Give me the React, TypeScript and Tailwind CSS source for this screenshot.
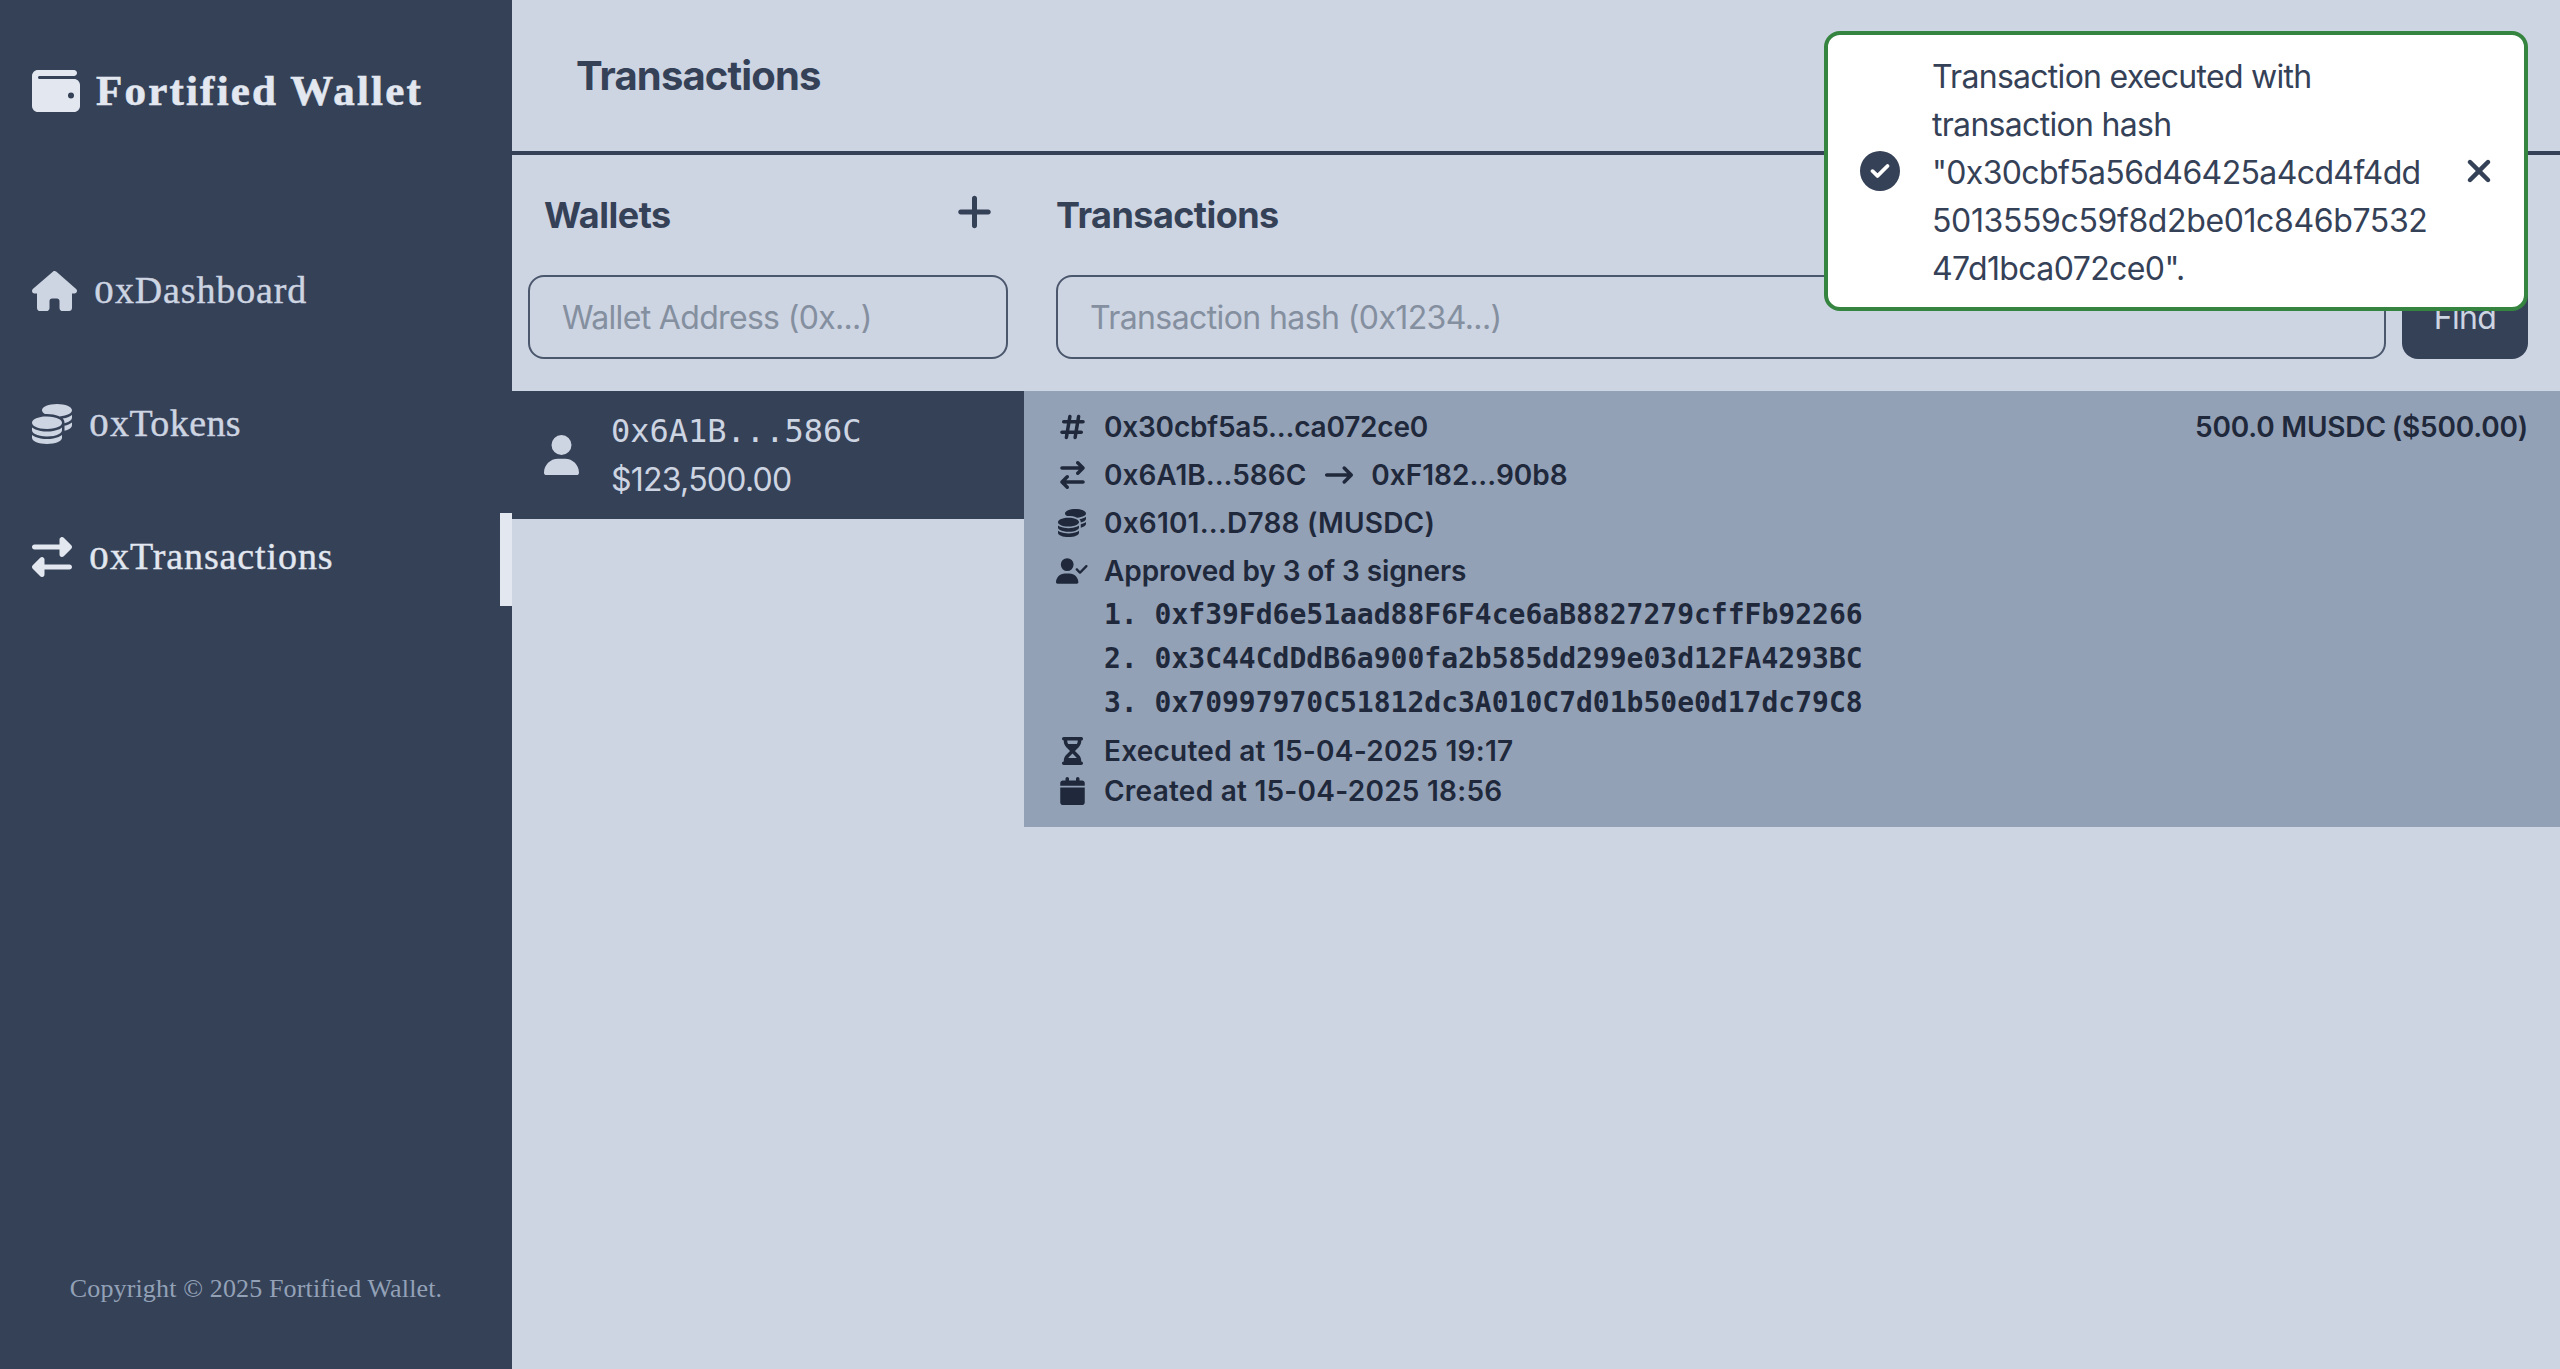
import type { ComponentType, ReactNode } from 'react';
import {
  FaWallet, FaHouse, FaCoins, FaRightLeft, FaPlus, FaUser, FaHashtag, FaArrowRightArrowLeft,
  FaUserCheck, FaArrowRightLong, FaHourglassHalf, FaCalendar, FaCircleCheck, FaXmark,
} from 'react-icons/fa6';

const signers = [
  '0xf39Fd6e51aad88F6F4ce6aB8827279cffFb92266',
  '0x3C44CdDdB6a900fa2b585dd299e03d12FA4293BC',
  '0x70997970C51812dc3A010C7d01b50e0d17dc79C8',
];

type Icon = ComponentType<{ className?: string }>;

interface NavItemProps {
  icon: Icon;
  iconClass: string;
  label: string;
  labelClass: string;
  active?: boolean;
}

function NavItem({ icon: I, iconClass, label, labelClass, active }: NavItemProps) {
  return (
    <a className={`flex h-[93px] items-center justify-between ${active ? 'text-[#e2e7f0]' : 'text-[#cdd4e2]'}`}>
      <span className="flex items-center pb-[5px] pl-8">
        <I className={iconClass} />
        <span className="ml-4 flex items-baseline text-[38px] leading-[48px] [-webkit-text-stroke:0.4px_currentColor]">
          <span className="inline-block w-[22px] origin-center scale-x-125 text-center text-[31px]">0</span>
          <span className={labelClass}>{label}</span>
        </span>
      </span>
      {active && <span className="h-full w-3 bg-[#e2e7f0]" />}
    </a>
  );
}

function Row({ icon: I, iconClass, className, children }: { icon: Icon; iconClass: string; className: string; children: ReactNode }) {
  return (
    <div className={`flex items-center ${className}`}>
      <span className="mr-4 flex w-8 justify-center"><I className={iconClass} /></span>
      {children}
    </div>
  );
}

export default function App() {
  return (
    <div className="relative flex h-[1369px] w-[2560px] overflow-hidden bg-[#cdd4e2] font-['Inter',sans-serif] text-[#354157]">
      <aside className="flex w-[512px] shrink-0 flex-col bg-[#354157] font-['Liberation_Serif',serif]">
        <div className="flex h-[182px] items-center pl-8 text-[#e2e7f0]">
          <FaWallet className="size-12" />
          <span className="ml-4 text-[43px] font-bold tracking-[2.2px] [-webkit-text-stroke:0.6px_currentColor]">Fortified Wallet</span>
        </div>
        <nav className="mt-[65px] flex flex-col gap-10">
          <NavItem icon={FaHouse} iconClass="h-10 w-[45px]" label="xDashboard" labelClass="tracking-[0.84px]" />
          <NavItem icon={FaCoins} iconClass="size-10" label="xTokens" labelClass="tracking-[0.4px]" />
          <NavItem icon={FaRightLeft} iconClass="size-10" label="xTransactions" labelClass="tracking-[0.9px]" active />
        </nav>
        <p className="mt-auto pb-[61px] text-center text-[26px] tracking-[0.15px] text-[#93a1b7]">Copyright © 2025 Fortified Wallet.</p>
      </aside>
      <main className="flex flex-1 flex-col">
        <header className="flex h-[155px] items-center border-b-4 border-[#354157] pl-16 pt-px">
          <h1 className="text-[40px] font-bold tracking-[-0.85px]">Transactions</h1>
        </header>
        <div className="flex flex-1">
          <section className="w-[512px]">
            <div className="flex h-[120px] items-center justify-between px-8">
              <h2 className="text-4xl font-bold tracking-[-0.5px]">Wallets</h2>
              <FaPlus className="mb-[6px] h-10 w-[35px]" />
            </div>
            <div className="mx-4 flex h-[84px] items-center rounded-2xl border-2 border-[#4a576d] px-8 pt-[2px] text-[32px] tracking-[-0.67px] text-[#848f9f]">Wallet Address (0x...)</div>
            <div className="mt-8 flex h-32 items-center bg-[#354157] pl-8 text-[#cdd4e2]">
              <FaUser className="h-10 w-[35px]" />
              <div className="ml-8">
                <p className="font-['DejaVu_Sans_Mono',monospace] text-[32px] leading-[48px]">0x6A1B...586C</p>
                <p className="pt-px text-[32px] leading-[48px] tracking-[-0.75px]">$123,500.00</p>
              </div>
            </div>
          </section>
          <section className="flex-1">
            <div className="flex h-[120px] items-center px-8">
              <h2 className="text-4xl font-bold tracking-[-0.55px]">Transactions</h2>
            </div>
            <div className="flex gap-4 px-8">
              <div className="flex h-[84px] flex-1 items-center rounded-2xl border-2 border-[#4a576d] px-8 pt-[2px] text-[32px] tracking-[-0.6px] text-[#848f9f]">Transaction hash (0x1234...)</div>
              <button className="h-[84px] w-[126px] rounded-2xl bg-[#354157] pt-[2px] text-[32px] tracking-[-0.6px] text-[#cdd4e2]">Find</button>
            </div>
            <div className="mt-8 flex h-[436px] justify-between bg-[#93a1b7] px-8 pt-3 text-[28px] font-semibold text-[#1f293b]">
              <div>
                <Row icon={FaHashtag} iconClass="h-7 w-[25px]" className="h-12 tracking-[-0.2px]">0x30cbf5a5...ca072ce0</Row>
                <Row icon={FaArrowRightArrowLeft} iconClass="h-7 w-[25px]" className="h-12">
                  0x6A1B...586C<FaArrowRightLong className="ml-[19px] mr-[18px] size-7" />0xF182...90b8
                </Row>
                <Row icon={FaCoins} iconClass="size-7" className="h-12 tracking-[0.2px]">0x6101...D788 (MUSDC)</Row>
                <Row icon={FaUserCheck} iconClass="h-[26px] w-8" className="h-12 tracking-[-0.1px]">Approved by 3 of 3 signers</Row>
                <ol className="-mt-[2px] ml-12 font-['DejaVu_Sans_Mono',monospace] font-bold leading-[44px]">
                  {signers.map((s, i) => <li key={s}>{i + 1}. {s}</li>)}
                </ol>
                <Row icon={FaHourglassHalf} iconClass="h-7 w-[21px]" className="mt-[6px] h-10 tracking-[0.24px]">Executed at 15-04-2025 19:17</Row>
                <Row icon={FaCalendar} iconClass="h-7 w-[25px]" className="h-10 tracking-[0.24px]">Created at 15-04-2025 18:56</Row>
              </div>
              <p className="flex h-12 gap-[6px] leading-[48px] tracking-[-0.2px]">
                <span>500.0 MUSDC</span>
                <span>($500.00)</span>
              </p>
            </div>
          </section>
        </div>
      </main>
      <div role="alert" className="absolute right-8 top-[31px] flex h-[280px] w-[704px] items-center rounded-2xl border-4 border-[#358440] bg-white">
        <FaCircleCheck className="ml-8 size-10 shrink-0" />
        <p className="ml-8 flex flex-col pt-[3px] text-[32px] leading-[48px]">
          <span className="tracking-[-0.72px]">Transaction executed with</span>
          <span className="tracking-[-0.7px]">transaction hash</span>
          <span className="tracking-[-0.63px]">"0x30cbf5a56d46425a4cd4f4dd</span>
          <span className="tracking-[-0.38px]">5013559c59f8d2be01c846b7532</span>
          <span className="tracking-[-0.6px]">47d1bca072ce0".</span>
        </p>
        <FaXmark className="absolute right-[27px] h-9 w-9" />
      </div>
    </div>
  );
}
